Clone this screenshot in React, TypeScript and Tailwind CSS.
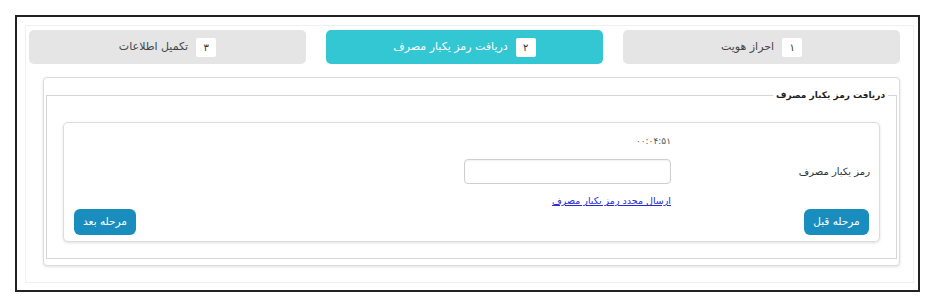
import React from "react";

const steps = [
  { num: "۱", title: "احراز هویت", active: false },
  { num: "۲", title: "دریافت رمز یکبار مصرف", active: true },
  { num: "۳", title: "تکمیل اطلاعات", active: false },
];

function StepTab({ num, title, active }: { num: string; title: string; active: boolean }) {
  return (
    <div
      className={
        active
          ? "flex-1 h-[34px] rounded-[5px] bg-[#33c6d3] flex items-center justify-center gap-[8px]"
          : "flex-1 h-[34px] rounded-[5px] bg-[#e5e5e5] flex items-center justify-center gap-[8px]"
      }
    >
      <span className="w-[20px] h-[19px] bg-white rounded-[2px] flex items-center justify-center text-[10px] text-[#333]">
        {num}
      </span>
      <span className={active ? "text-[11px] text-white" : "text-[11px] text-[#444]"}>{title}</span>
    </div>
  );
}

export default function App() {
  return (
    <div
      className="w-[937px] h-[304px] bg-white pt-[15px] pl-[15px]"
      style={{ fontFamily: '"DejaVu Sans", sans-serif' }}
    >
      <div className="w-[905px] h-[277px] border-2 border-[#222] pt-[8px] pb-[7px] pl-[8px] pr-[4px]">
        <div dir="rtl" className="h-full border border-[#f0f0f0] pt-[4px] pr-[13px] pl-[3px]">
          {/* steps */}
          <div className="flex gap-[20px]">
            {steps.map((s) => (
              <StepTab key={s.num} {...s} />
            ))}
          </div>

          {/* main card */}
          <div className="mt-[13px] ml-[14px] h-[189px] bg-white border border-[#dcdcdc] rounded-[4px] shadow-[0_1px_3px_rgba(0,0,0,0.12)] pt-[11px] pr-[2px] pl-[2px] pb-[7px]">
            <fieldset className="border border-[#d6d6d6] p-0">
              <legend className="mr-[8px] px-[3px] text-[9px] font-bold text-[#222]">
                دریافت رمز یکبار مصرف
              </legend>

              <div className="px-[16px] pt-[19px] pb-[16px]">
                <div className="h-[120px] bg-white border border-[#dcdcdc] rounded-[5px] shadow-[0_1px_3px_rgba(0,0,0,0.12)] pt-[13px]">
                  {/* timer */}
                  <div className="flex h-[12px] items-center">
                    <div className="w-[208px]" />
                    <span className="text-[9px] text-[#555] tracking-[2px]">۰۰:۰۴:۵۱</span>
                  </div>

                  {/* otp input */}
                  <div className="flex mt-[11px] h-[25px] items-center">
                    <div className="w-[208px] pr-[9px] text-[10px] text-[#333]">رمز یکبار مصرف</div>
                    <input className="w-[207px] h-[25px] border border-[#cfcfcf] rounded-[4px] shadow-[inset_0_1px_2px_rgba(0,0,0,0.06)] outline-none" />
                  </div>

                  {/* resend */}
                  <div className="flex mt-[11px] h-[14px] items-center">
                    <div className="w-[208px]" />
                    <a href="#" className="text-[9.5px] text-[#2a2ad4] underline">
                      ارسال مجدد رمز یکبار مصرف
                    </a>
                  </div>

                  {/* nav buttons */}
                  <div className="flex justify-between px-[10px]">
                    <button className="w-[65px] h-[26px] rounded-[6px] bg-[#1a8dbf] text-white text-[10.5px]">
                      مرحله قبل
                    </button>
                    <button className="w-[62px] h-[26px] rounded-[6px] bg-[#1a8dbf] text-white text-[10.5px]">
                      مرحله بعد
                    </button>
                  </div>
                </div>
              </div>
            </fieldset>
          </div>
        </div>
      </div>
    </div>
  );
}
